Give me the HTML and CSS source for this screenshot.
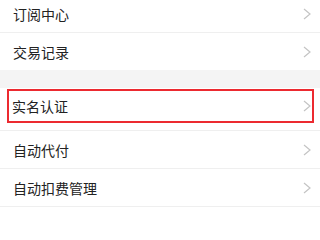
FILE: index.html
```html
<!DOCTYPE html>
<html lang="zh">
<head>
<meta charset="utf-8">
<link rel="stylesheet" href="styles.css">
</head>
<body>
<div class="list">
  <div class="item"><span class="label">订阅中心</span><svg class="chev" width="8" height="12" viewBox="0 0 8 12"><path d="M1 1 L7 6 L1 11" fill="none" stroke="#c4c4c4" stroke-width="1.2"/></svg></div>
  <div class="item last"><span class="label">交易记录</span><svg class="chev" width="8" height="12" viewBox="0 0 8 12"><path d="M1 1 L7 6 L1 11" fill="none" stroke="#c4c4c4" stroke-width="1.2"/></svg></div>
  <div class="gap"></div>
  <div class="item marked">
    <div class="highlight"><span class="label">实名认证</span><svg class="chev" width="8" height="12" viewBox="0 0 8 12"><path d="M1 1 L7 6 L1 11" fill="none" stroke="#c4c4c4" stroke-width="1.2"/></svg></div>
  </div>
  <div class="item"><span class="label">自动代付</span><svg class="chev" width="8" height="12" viewBox="0 0 8 12"><path d="M1 1 L7 6 L1 11" fill="none" stroke="#c4c4c4" stroke-width="1.2"/></svg></div>
  <div class="item"><span class="label">自动扣费管理</span><svg class="chev" width="8" height="12" viewBox="0 0 8 12"><path d="M1 1 L7 6 L1 11" fill="none" stroke="#c4c4c4" stroke-width="1.2"/></svg></div>
</div>
</body>
</html>
```
FILE: styles.css
```css
html, body {
  margin: 0;
  padding: 0;
  background: #ffffff;
  font-family: "Noto Sans CJK SC", "Noto Sans", sans-serif;
  overflow: hidden;
}
.list {
  display: flex;
  flex-direction: column;
  margin-top: -5px;
}
.item {
  display: flex;
  align-items: center;
  justify-content: space-between;
  height: 37px;
  padding: 0 9px 0 13px;
  border-bottom: 1px solid #efefef;
  background: #ffffff;
}
.item.last {
  border-bottom: none;
}
.label {
  font-size: 14px;
  color: #222222;
  line-height: 1;
}
.chev {
  display: block;
  flex: none;
}
.gap {
  height: 18px;
  background: #f4f4f4;
}
.item.marked {
  height: 42px;
  padding: 0;
  align-items: flex-start;
  display: block;
}
.highlight {
  display: flex;
  align-items: center;
  justify-content: space-between;
  height: 30px;
  margin: 1px 6px 0 7px;
  padding: 0 1px 0 3px;
  border: 2px solid #ec2a30;
}
```
